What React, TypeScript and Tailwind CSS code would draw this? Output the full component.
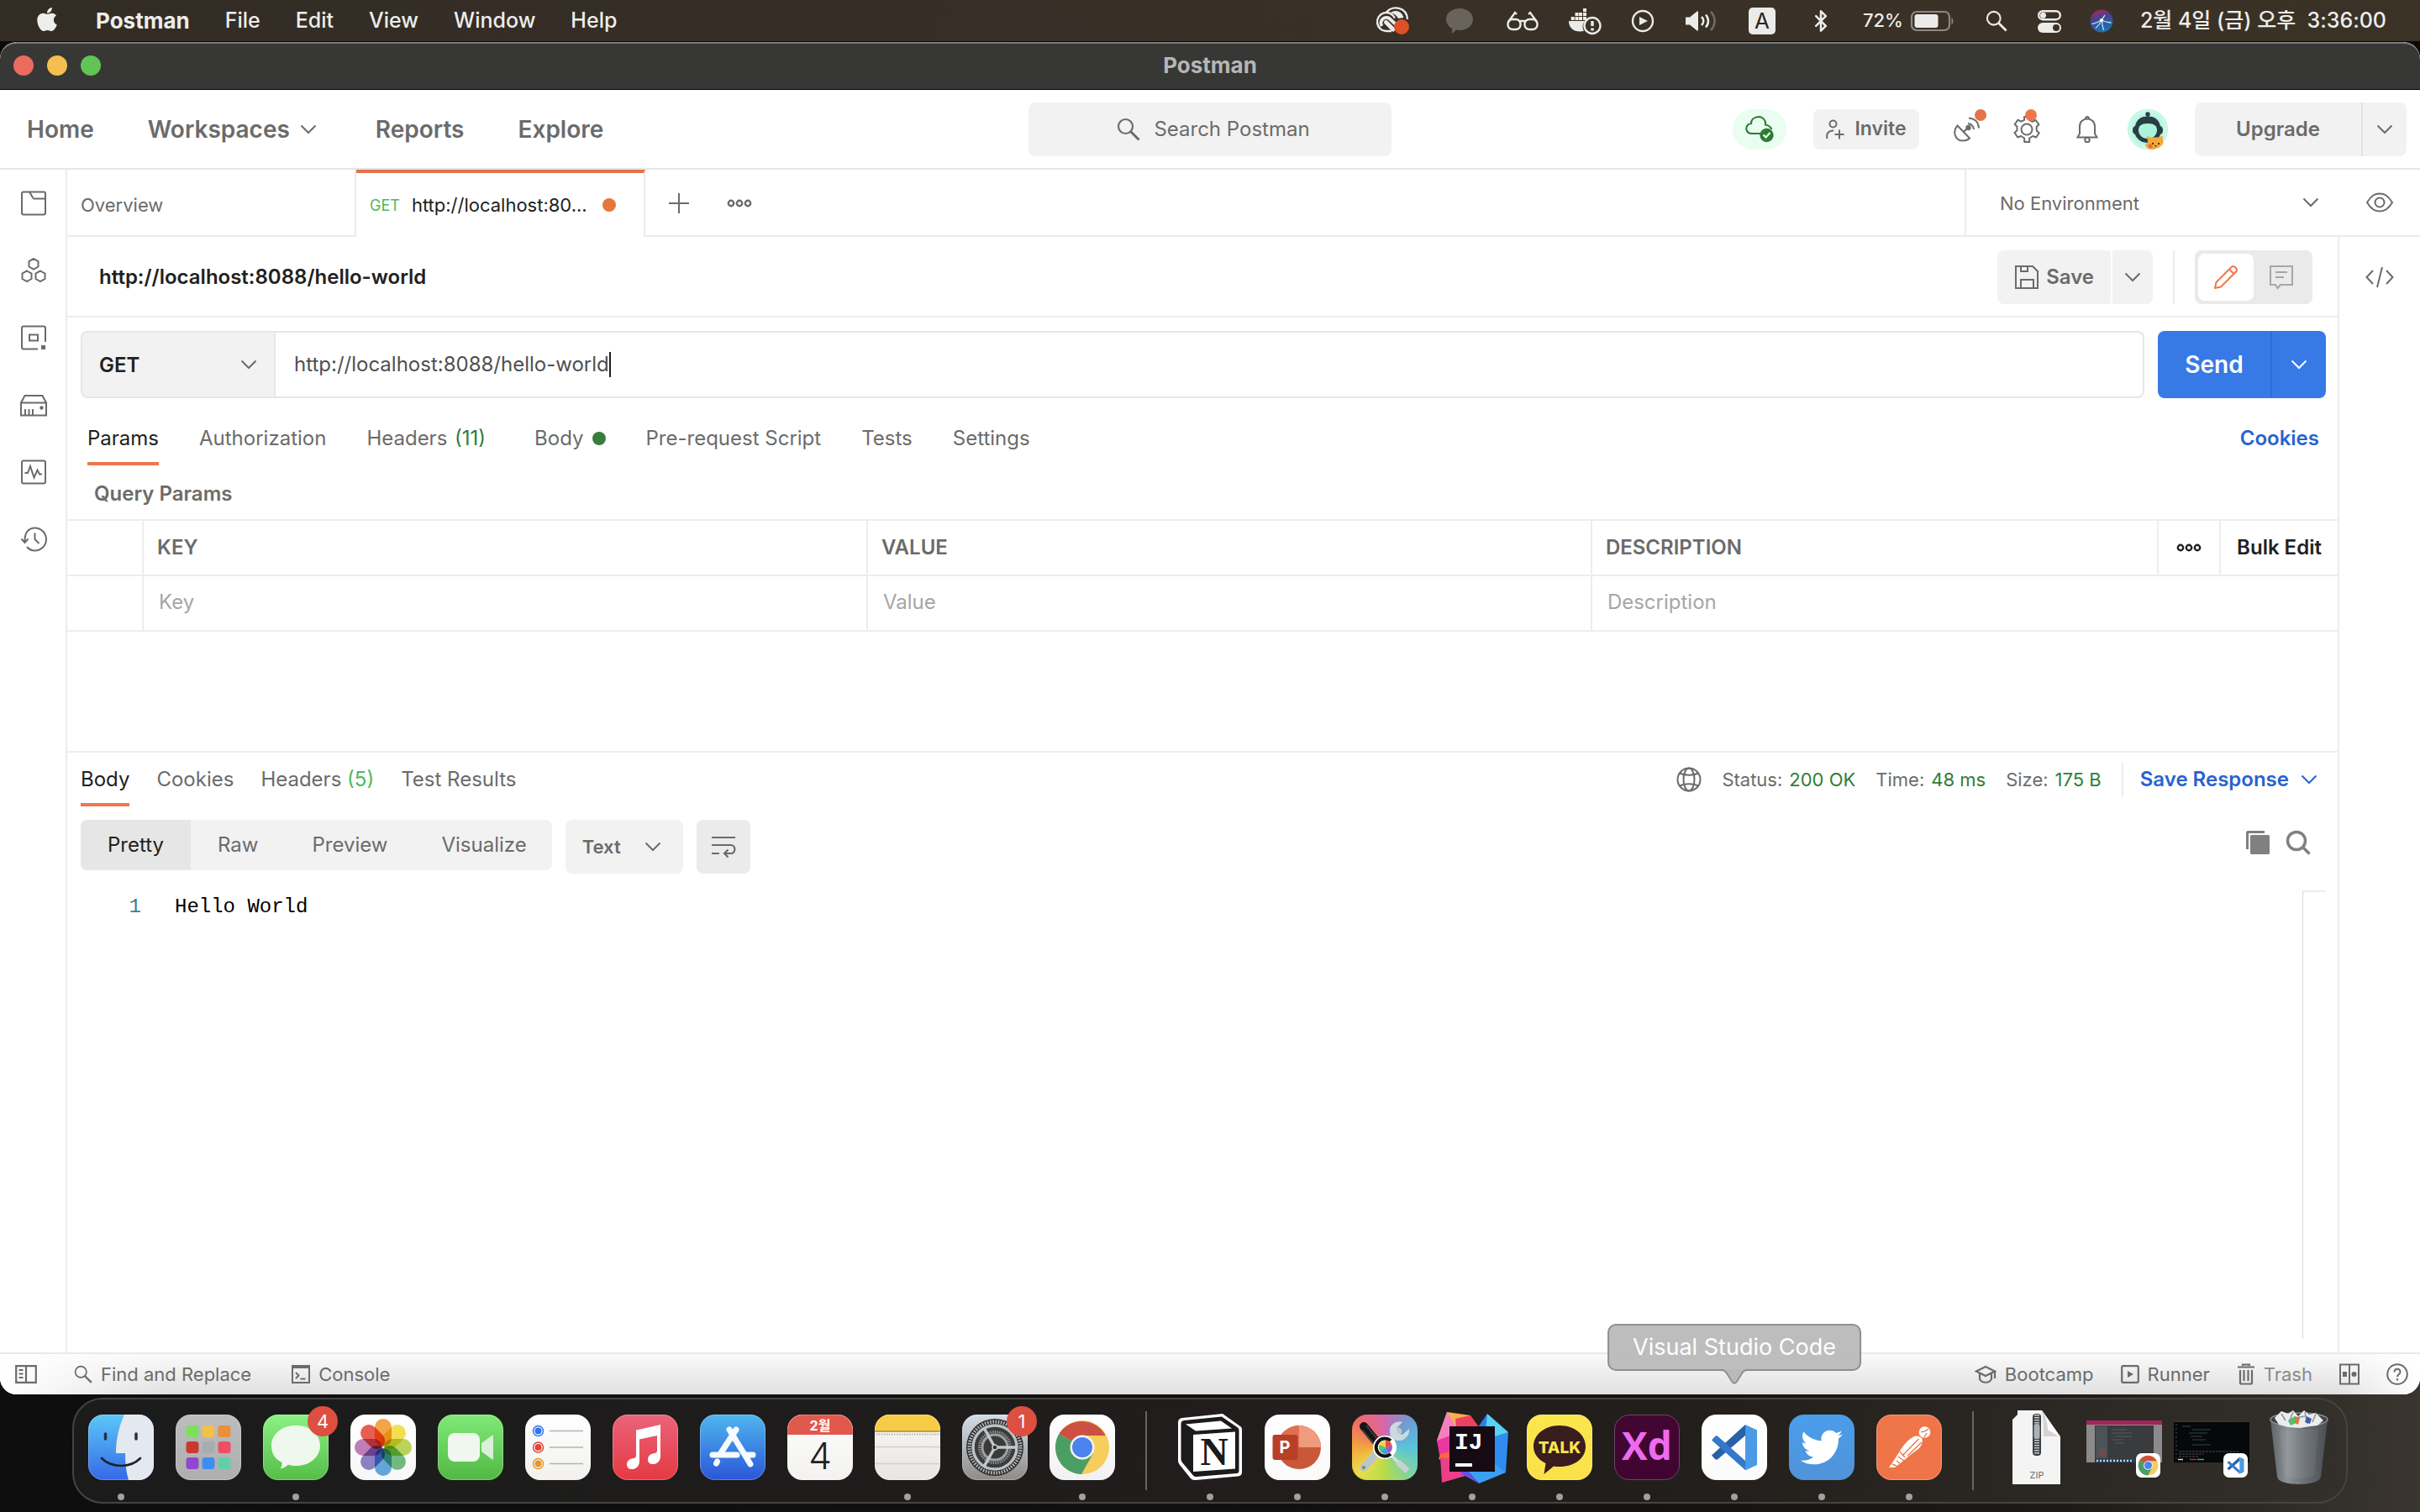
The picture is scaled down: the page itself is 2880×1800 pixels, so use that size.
import React from "react";
import { Bluetooth } from "lucide-react";
import { FaApple, FaTwitter } from "react-icons/fa";

const SANS = "font-['Inter','Noto_Sans_CJK_KR',sans-serif]";

/* ---------- shared small icons ---------- */

function Chevron({ className = "" }: { className?: string }) {
  return (
    <svg viewBox="0 0 20 20" className={`size-5 shrink-0 ${className}`} fill="none" stroke="currentColor" strokeWidth="2">
      <path d="M1.500 5.500 10 14l8.500-8.500" />
    </svg>
  );
}

function Dots({ className = "" }: { className?: string }) {
  return (
    <svg viewBox="0 0 30 12" className={`h-3 w-[30px] shrink-0 ${className}`} fill="none" stroke="currentColor" strokeWidth="2.400">
      <circle cx="5" cy="6" r="3.200" />
      <circle cx="15" cy="6" r="3.200" />
      <circle cx="25" cy="6" r="3.200" />
    </svg>
  );
}

function Magnifier({ className = "" }: { className?: string }) {
  return (
    <svg viewBox="0 0 28 28" className={`shrink-0 ${className}`} fill="none" stroke="currentColor" strokeWidth="2.200">
      <circle cx="10.500" cy="10.500" r="8.500" />
      <path d="m16.500 16.500 10 10" strokeWidth="3" />
    </svg>
  );
}

/* ---------- macOS menu bar ---------- */

function MenuBar() {
  const menus = ["File", "Edit", "View", "Window", "Help"];
  return (
    <header className="flex h-[49px] shrink-0 items-center bg-gradient-to-r from-[#322c24] via-[#382f27] to-[#3b3226] pr-10 pl-10 text-[25px] text-[#ededeb]">
      <FaApple className="mb-1 size-8" />
      <nav className="ml-[42px] flex items-center gap-[42px] font-medium">
        <button className="text-[26px] font-bold">Postman</button>
        {menus.map((m) => (
          <button key={m}>{m}</button>
        ))}
      </nav>
      <div className="ml-auto flex items-center">
        <svg viewBox="0 0 42 34" className="h-[34px] w-[42px]" fill="none" stroke="#ebebe9" strokeWidth="2.400">
          <path d="M13 6.500C20-2 37 0 38 15" />
          <path d="M19 29H12.500A11 11 0 1 1 23 13.500" />
          <path d="M18 7c8-5 14 0 15.500 6L27 14c-2-4-5-5.500-9-7z" fill="#ebebe9" stroke="none" />
          <path d="m21 27-8.500-8.500" strokeWidth="5" strokeLinecap="round" />
          <path d="M7.500 23a6.500 6.500 0 0 1 9-9L24 21" strokeWidth="4" />
          <circle cx="31" cy="24" r="9" fill="#dc5125" stroke="none" />
        </svg>
        <svg viewBox="0 0 32 30" className="ml-[42px] h-[30px] w-8" fill="#68645b">
          <path d="M16 0c9 0 16 5.500 16 13s-7 13-16 13c-1.500 0-3 0-4-.5C10 28 8.500 29 6.500 30c.7-2 .8-3.700.5-6C2.500 21.500 0 17.500 0 13 0 5.500 7 0 16 0z" />
        </svg>
        <svg viewBox="0 0 38 24" className="ml-10 h-6 w-[38px]" fill="none" stroke="#ebebe9" strokeWidth="2.400">
          <rect x="1.500" y="10" width="15" height="12" rx="5.500" />
          <rect x="21.500" y="10" width="15" height="12" rx="5.500" />
          <path d="M16 12h6M2 13l8-11 2 2M36 13 28 2l-2 2" />
        </svg>
        <svg viewBox="0 0 40 34" className="ml-9 h-[34px] w-10">
          <g fill="#ebebe9">
            <path d="M17 2h4v4h-4zM7.500 7h4v4h-4zM12 7h4v4h-4zM17 7h4v4h-4zM2.700 12h4v4h-4zM7.500 12h4v4h-4zM12 12h4v4h-4zM17 12h4v4h-4zM0 17h19c-3 4-3 8-1 12C8 31 0 27 0 17z" />
          </g>
          <circle cx="28" cy="22.500" r="9.500" fill="#3b3226" stroke="#ebebe9" strokeWidth="2.400" />
          <path d="M28 17v6M28 25.500v3" stroke="#ebebe9" strokeWidth="3.500" />
        </svg>
        <svg viewBox="0 0 28 28" className="ml-[34px] size-7">
          <circle cx="14" cy="14" r="12" fill="none" stroke="#ebebe9" strokeWidth="2.400" />
          <path d="m10 9 10 5-10 5z" fill="#ebebe9" />
        </svg>
        <svg viewBox="0 0 38 28" className="ml-9 h-7 w-[38px]" fill="none" stroke="#ebebe9" strokeWidth="2.600">
          <path d="M1 9.500h5L14 3c1-1 2-1 2 1v20c0 2-1 2-2 1l-8-6.500H1z" fill="#ebebe9" stroke="none" />
          <path d="M20 9c3 3 3 7 0 10M25 6.500c4 4.500 4 10.500 0 15" />
          <path d="M31 3c6 6 6 16 0 22" stroke="#736c62" />
        </svg>
        <span className="ml-[38px] flex size-8 items-center justify-center rounded-[5px] bg-[#ebebe9] text-[26px] text-[#2b261d]">A</span>
        <Bluetooth className="ml-10 size-7" strokeWidth={2.2} />
        <span className="ml-9 text-[22px] font-medium">72%</span>
        <svg viewBox="0 0 54 26" className="ml-2 h-[26px] w-[54px]">
          <rect x="2" y="2" width="45" height="22" rx="6" fill="none" stroke="#8e8880" strokeWidth="2.200" />
          <path d="M49.500 9c2.500 1 2.500 7 0 8z" fill="#8e8880" />
          <rect x="5.500" y="5" width="28" height="16" rx="3" fill="#ebebe9" />
        </svg>
        <Magnifier className="ml-9 size-[26px]" />
        <svg viewBox="0 0 28 28" className="ml-9 size-7">
          <rect x="1.200" y="2.200" width="25.600" height="10" rx="5" fill="none" stroke="#ebebe9" strokeWidth="2.400" />
          <circle cx="6.500" cy="7.200" r="3.500" fill="#ebebe9" />
          <rect y="16" width="28" height="12" rx="6" fill="#ebebe9" />
          <circle cx="22" cy="22" r="4" fill="#3b3226" />
        </svg>
        <svg viewBox="0 0 28 28" className="ml-[34px] size-7">
          <defs>
            <linearGradient id="siri" x1="0" y1="0" x2="0.300" y2="1">
              <stop offset="0" stopColor="#b4264f" />
              <stop offset="0.450" stopColor="#4a3f8f" />
              <stop offset="1" stopColor="#1f6fb4" />
            </linearGradient>
          </defs>
          <circle cx="14" cy="14" r="13.500" fill="url(#siri)" />
          <path d="M2.500 17.500c4.500-.5 8-2.500 11.500-5 3 2.500 6 3 11.500 3.500M14.500 13c0 5 .5 8 2 12M14 13c-1.500 4-4 7-7 9.500M14 13l4-6" stroke="#9fe6ee" strokeWidth="1.400" fill="none" />
          <circle cx="14" cy="13" r="2" fill="#fff" />
        </svg>
        <span className="ml-8 font-medium whitespace-pre">2월 4일 (금) 오후  3:36:00</span>
      </div>
    </header>
  );
}

/* ---------- Postman header ---------- */

function TitleBar() {
  return (
    <div className="relative flex h-[57px] shrink-0 items-center justify-center rounded-t-[20px] border-t-2 border-b border-t-[#7b7b7a] border-b-black bg-[#373735] pb-[3px]">
      <div className="absolute left-4 flex gap-4">
        <button aria-label="Close" className="size-6 rounded-full bg-[#ec6b5f]" />
        <button aria-label="Minimize" className="size-6 rounded-full bg-[#f4bf50]" />
        <button aria-label="Zoom" className="size-6 rounded-full bg-[#61c455]" />
      </div>
      <h1 className="text-[26px] font-bold text-[#b6b6b5]">Postman</h1>
    </div>
  );
}

function AppHeader() {
  return (
    <div className="flex h-[95px] shrink-0 items-center border-b-2 border-[#e6e6e6] bg-white px-4 text-[#6b6b6b]">
      <nav className="flex flex-1 items-center gap-16 text-[28px] font-semibold">
        <a href="#home" className="ml-4">Home</a>
        <button className="mr-[6px] flex items-center gap-3">
          Workspaces
          <Chevron />
        </button>
        <a href="#reports">Reports</a>
        <a href="#explore">Explore</a>
      </nav>
      <button className="flex h-16 w-[432px] items-center justify-center gap-4 rounded-lg bg-[#f2f2f2] pl-2 text-[24px]">
        <Magnifier className="size-7" />
        Search Postman
      </button>
      <div className="flex flex-1 items-center justify-end">
        <button aria-label="Sync status" className="flex h-12 w-16 items-center justify-center rounded-full bg-[#e9fdf1]">
          <svg viewBox="0 0 34 32" className="h-8 w-[34px]" fill="none" stroke="#2f7d35" strokeWidth="2.200">
            <path d="M18 21H7.500A6 6 0 0 1 7 9c0-9 14-11 17-2v3.500c4 .5 6 2.500 7.500 5.500" />
            <circle cx="25.500" cy="23" r="8.200" fill="#2f7d35" stroke="none" />
            <path d="m21.500 22.500 3 3 5-5.500" stroke="#fff" />
          </svg>
        </button>
        <button className="ml-8 flex h-12 w-[126px] items-center justify-center gap-3 rounded-lg bg-[#f2f2f2] text-[23px] font-semibold">
          <svg viewBox="0 0 22 24" className="h-6 w-[22px]" fill="none" stroke="currentColor" strokeWidth="2">
            <circle cx="8.500" cy="5.500" r="4" />
            <path d="M1.200 23v-3c0-4 3-6.500 8-6.500M10.500 18h11M16 12.500v11" />
          </svg>
          Invite
        </button>
        <button aria-label="Capture requests" className="relative ml-10 flex size-8 items-center justify-center">
          <svg viewBox="0 0 32 32" className="size-8" fill="none" stroke="currentColor" strokeWidth="2">
            <path d="M5.500 11.500C-1 19 3 29.500 12 29.500c3.500 0 6-1 8-3zM13 19l4-4M18 9c4 .5 6.500 3 7 7M19 2.500c7 .5 11.500 5 12 12" />
            <circle cx="18.500" cy="14" r="3.200" fill="currentColor" stroke="none" />
          </svg>
          <span className="absolute -top-2 -right-2 size-[14px] rounded-full bg-[#e27549]" />
        </button>
        <button aria-label="Settings" className="relative ml-10 flex size-8 items-center justify-center">
          <svg viewBox="0 0 32 32" className="size-8" fill="none" stroke="currentColor" strokeWidth="2">
            <path d="M13 1h6v4l4 1.800 3.500-2 4 5.500-2.800 2.700v4.500l3 2.700-3.500 5.300-4-1.500-4 2.500V31h-6v-4.500l-4-2.500-4 1.500L1.500 20l3-2.700v-4.600L1.700 10l3.800-5.300 3.500 2L13 5z" strokeLinejoin="round" />
            <circle cx="16" cy="16" r="6.500" />
          </svg>
          <span className="absolute -top-2 right-1 size-[14px] rounded-full bg-[#f0764a]" />
        </button>
        <button aria-label="Notifications" className="ml-10 flex size-8 items-center justify-center">
          <svg viewBox="0 0 32 32" className="size-8" fill="none" stroke="currentColor" strokeWidth="2">
            <path d="M4.500 25.500h23L25 21V12.500c0-12-18-12-18 0V21zM14 3.500c-.5-3.300 4.500-3.300 4 0" />
            <circle cx="16" cy="28.500" r="2.800" />
          </svg>
        </button>
        <button aria-label="Account" className="ml-8">
          <svg viewBox="0 0 48 48" className="size-12">
            <circle cx="24" cy="24" r="24" fill="#b5f5df" />
            <circle cx="24" cy="24" r="22" fill="none" stroke="#d8fbef" strokeWidth="1.500" />
            <circle cx="24" cy="24" r="19.500" fill="none" stroke="#d8fbef" strokeWidth="1" />
            <circle cx="24" cy="6" r="2.700" fill="#2a3d45" />
            <path d="M23 6h2v6h-2z" fill="#2a3d45" />
            <path d="M6 25c0-3 1-4 3-5C11 11 17 8.500 24 8.500S37 11 39 20c2 1 3 2 3 5s-1 4-3 5c-2 6-8 10-15 10S11 36 9 30c-2-1-3-2-3-5z" fill="#2a3d45" />
            <path d="M13 25c0-5 3-8 11-8s11 3 11 8-4 10-11 10-11-5-11-10z" fill="#a9f3da" />
            <path d="M23 31.500c2.500 1 4 2.500 5 2h7c2 0 4-1 6.500-2l1 9C41 44 35 47.500 30 48c-5 0-7-2-9-5 1-2 3-3 3-5z" fill="#f3a83b" />
            <circle cx="27" cy="44" r="2.500" fill="#ee6a4b" />
            <path d="M29 40h2v2h-2zM36 40h2v2h-2zM32 43h3l-1.500 2z" fill="#4b3420" />
          </svg>
        </button>
        <div className="ml-8 flex h-16 w-[252px] overflow-hidden rounded-lg bg-[#f2f2f2]">
          <button className="flex-1 border-r-2 border-[#e3e3e3] text-[24px] font-semibold">Upgrade</button>
          <button aria-label="Upgrade options" className="flex w-[52px] items-center justify-center">
            <Chevron />
          </button>
        </div>
      </div>
    </div>
  );
}

/* ---------- left rail ---------- */

const railIcons: { label: string; icon: React.ReactNode }[] = [
  {
    label: "Collections",
    icon: (
      <>
        <path d="M2 4.500C2 3.500 3 2.500 4 2.500h24c1 0 2 1 2 2v23c0 1-1 2-2 2H4c-1 0-2-1-2-2z" />
        <path d="M11 2.500c1 1 4 8 5.500 8H30" />
      </>
    ),
  },
  {
    label: "APIs",
    icon: <path d="m16 2 5.500 3.200v6.300L16 14.700l-5.500-3.200V5.200zM8 16.500l5.500 3.200V26L8 29.200 2.500 26v-6.300zM24 16.500l5.500 3.200V26L24 29.200 18.500 26v-6.300z" />,
  },
  {
    label: "Environments",
    icon: (
      <>
        <path d="M21 29.500H4c-1 0-2-1-2-2v-23c0-1 1-2 2-2h24c1 0 2 1 2 2V21" />
        <rect x="11" y="12.500" width="10" height="7" />
        <path d="M25 25h5v5h-5z" fill="currentColor" stroke="none" />
      </>
    ),
  },
  {
    label: "Mock servers",
    icon: (
      <>
        <path d="M1 13.500h30v15H1zM1 13.500 5.500 5h21L31 13.500M6 21v7M10.500 21v7M15 21v7" />
        <circle cx="25.500" cy="19.500" r="2.200" fill="currentColor" stroke="none" />
      </>
    ),
  },
  {
    label: "Monitors",
    icon: (
      <>
        <rect x="2" y="2.500" width="28" height="27" rx="2" />
        <path d="M5.500 17h3.500l3-8 4.500 13.500 4-9 2.500 5h3" />
      </>
    ),
  },
  {
    label: "History",
    icon: <path d="M5.500 19.500C5 8 10 2.500 17.500 2.500 25 2.500 31 8.500 31 16s-6 13.500-13.500 13.500c-4 0-7-1.500-9.500-4.500M1.500 15.500l4 4.500 4-4.500M17.500 8.500V16l5 5" />,
  },
];

function LeftRail() {
  return (
    <nav className="flex w-20 shrink-0 flex-col items-center gap-12 border-r-2 border-[#ededed] pt-6 pl-[2px] text-[#6b6b6b]">
      {railIcons.map((r) => (
        <button key={r.label} aria-label={r.label}>
          <svg viewBox="0 0 32 32" className="size-8" fill="none" stroke="currentColor" strokeWidth="2">
            {r.icon}
          </svg>
        </button>
      ))}
    </nav>
  );
}

/* ---------- tab strip ---------- */

function TabStrip() {
  return (
    <div className="flex h-20 shrink-0 text-[22px] text-[#6b6b6b]">
      <button className="w-[344px] border-r-2 border-b-2 border-[#ebebeb] pt-[6px] pl-4 text-left">Overview</button>
      <button className="flex w-[344px] items-center border-t-4 border-r-2 border-t-[#e27549] border-r-[#ebebeb] pl-4">
        <span className="mr-[14px] text-[18px] text-[#4fb85b]">GET</span>
        <span className="text-[#212121]">http://localhost:80...</span>
        <span className="ml-[18px] size-4 rounded-full bg-[#e57839]" />
      </button>
      <div className="flex flex-1 items-center border-r-2 border-b-2 border-[#ebebeb] pt-[2px] pl-[27px]">
        <button aria-label="New tab">
          <svg viewBox="0 0 26 26" className="size-[26px]" stroke="currentColor" strokeWidth="2">
            <path d="M13 1v24M1 13h24" />
          </svg>
        </button>
        <button aria-label="Tab options" className="ml-11">
          <Dots />
        </button>
      </div>
      <div className="flex w-[540px] items-center border-b-2 border-[#ebebeb]">
        <div className="relative flex h-full flex-1 items-center">
          <select aria-label="Environment" className="h-full w-full appearance-none pt-[2px] pl-10 outline-none">
            <option>No Environment</option>
          </select>
          <Chevron className="pointer-events-none absolute right-14" />
        </div>
        <button aria-label="Environment quick look" className="mr-8">
          <svg viewBox="0 0 32 24" className="h-6 w-8" fill="none" stroke="currentColor" strokeWidth="2">
            <path d="M1 12C6 4 10 1.500 16 1.500S26 4 31 12c-5 8-9 10.500-15 10.500S6 20 1 12z" />
            <circle cx="16" cy="12" r="5.500" />
          </svg>
        </button>
      </div>
    </div>
  );
}

/* ---------- request ---------- */

function RequestTitle() {
  return (
    <div className="flex h-24 shrink-0 items-center border-b-2 border-[#ededed] pt-[2px] pr-[30px] pl-[38px] text-[24px] font-semibold">
      <h2 className="flex-1 text-[#212121]">http://localhost:8088/hello-world</h2>
      <div className="flex h-16 gap-[2px] text-[#6b6b6b]">
        <button className="flex items-center gap-2 rounded-l-lg rounded-r bg-[#f2f2f2] px-5">
          <svg viewBox="0 0 30 30" className="size-[30px]" fill="none" stroke="currentColor" strokeWidth="2">
            <path d="M2 2h20l6 6v20H2zM8 2v6h8V2M8 28V18h15v10" />
          </svg>
          Save
        </button>
        <button aria-label="Save options" className="flex w-12 items-center justify-center rounded-r-lg bg-[#f2f2f2]">
          <Chevron />
        </button>
      </div>
      <div className="mx-6 h-16 w-[2px] bg-[#ededed]" />
      <div className="flex h-16 w-[140px] rounded-lg bg-[#eaeaea] p-1">
        <button aria-label="Edit" className="flex flex-1 items-center justify-center rounded-lg bg-white text-[#f0764a]">
          <svg viewBox="0 0 30 30" className="size-[30px]" fill="none" stroke="currentColor" strokeWidth="2">
            <path d="m2 28 1.500-7L22 2.500c2.500-2 7.500 3 5.500 5.500L9 26.500zM19 5.500l5.500 5.500" strokeLinejoin="round" />
          </svg>
        </button>
        <button aria-label="Comments" className="flex flex-1 items-center justify-center text-[#a6a6a6]">
          <svg viewBox="0 0 30 30" className="size-[30px]" fill="none" stroke="currentColor" strokeWidth="2">
            <path d="M2 2h26v22H14l-3.500 4L8 24H2zM8 9h14M8 15h10" />
          </svg>
        </button>
      </div>
    </div>
  );
}

function UrlBar() {
  return (
    <div className="flex h-24 shrink-0 items-end gap-4 pr-[14px] pl-4">
      <div className="flex h-20 flex-1 overflow-hidden rounded-lg border-2 border-[#e6e6e6]">
        <div className="relative flex w-[230px] items-center border-r-2 border-[#e6e6e6] bg-[#f2f2f2]">
          <select aria-label="HTTP method" className="h-full w-full appearance-none pt-[2px] pl-5 text-[24px] font-semibold text-[#212121] outline-none">
            <option>GET</option>
          </select>
          <Chevron className="pointer-events-none absolute right-5 text-[#6b6b6b]" />
        </div>
        <div className="flex flex-1 items-center pl-[22px]">
          <input
            aria-label="Request URL"
            defaultValue="http://localhost:8088/hello-world"
            className="field-sizing-content text-[24px] text-[#505050] outline-none"
          />
          <span className="h-[30px] w-[2px] bg-[#212121]" />
        </div>
      </div>
      <div className="flex h-20 w-[200px] overflow-hidden rounded-lg bg-[#3779e5] text-white">
        <button className="flex-1 border-r-2 border-[#2f6dd6] text-[28px] font-semibold">Send</button>
        <button aria-label="Send options" className="flex w-16 items-center justify-center">
          <Chevron />
        </button>
      </div>
    </div>
  );
}

function RequestTabs() {
  const tab = "h-16 border-b-4 border-transparent pt-1";
  return (
    <div className="flex h-20 shrink-0 items-end pr-[22px] pl-6 text-[24px] text-[#6b6b6b]">
      <div role="tablist" className="flex flex-1 gap-12">
        <button role="tab" aria-selected className="h-16 border-b-4 border-[#f0764a] pt-1 text-[#212121]">
          Params
        </button>
        <button role="tab" className={tab}>Authorization</button>
        <button role="tab" className={`${tab} mr-[10px]`}>
          Headers <span className="ml-[2px] text-[#2f7d35]">(11)</span>
        </button>
        <button role="tab" className={`${tab} flex items-center gap-[10px]`}>
          Body
          <span className="size-4 rounded-full bg-[#377d3b]" />
        </button>
        <button role="tab" className={tab}>Pre-request Script</button>
        <button role="tab" className={tab}>Tests</button>
        <button role="tab" className={tab}>Settings</button>
      </div>
      <button className={`${tab} font-semibold text-[#2763cf]`}>Cookies</button>
    </div>
  );
}

function ParamsTable() {
  const cell = "border-[#ededed] text-left";
  const field = "w-full pb-[2px] outline-none placeholder:text-[#a6a6a6]";
  return (
    <table className="w-full shrink-0 table-fixed border-collapse text-[24px] text-[#6b6b6b]">
      <colgroup>
        <col className="w-[90px]" />
        <col className="w-[31.9%]" />
        <col className="w-[31.9%]" />
        <col />
        <col className="w-[74px]" />
        <col className="w-[140px]" />
      </colgroup>
      <thead>
        <tr className="h-[66px] border-y-2 border-[#ededed]">
          <th className={`${cell} border-r-2`} />
          <th className={`${cell} border-r-2 pl-4 font-semibold`}>KEY</th>
          <th className={`${cell} border-r-2 pl-4 font-semibold`}>VALUE</th>
          <th className={`${cell} border-r-2 pl-4 font-semibold`}>DESCRIPTION</th>
          <th className={`${cell} border-r-2`}>
            <button aria-label="Column options" className="flex w-full justify-center text-[#212121]">
              <Dots />
            </button>
          </th>
          <th className="text-center">
            <button className="font-semibold text-[#212121]">Bulk Edit</button>
          </th>
        </tr>
      </thead>
      <tbody>
        <tr className="h-[66px] border-b-2 border-[#ededed]">
          <td className={`${cell} border-r-2`} />
          <td className={`${cell} border-r-2 pl-[18px]`}>
            <input aria-label="Key" placeholder="Key" className={field} />
          </td>
          <td className={`${cell} border-r-2 pl-[18px]`}>
            <input aria-label="Value" placeholder="Value" className={field} />
          </td>
          <td colSpan={3} className={`${cell} pl-[18px]`}>
            <input aria-label="Description" placeholder="Description" className={field} />
          </td>
        </tr>
      </tbody>
    </table>
  );
}

/* ---------- response ---------- */

function Metric({ label, value }: { label: string; value: string }) {
  return (
    <span className="flex gap-2">
      {label} <span className="text-[#2f7d35]">{value}</span>
    </span>
  );
}

function ResponsePane() {
  const tab = "h-16 border-b-4 border-transparent pt-1";
  return (
    <section className="flex flex-1 flex-col border-t-2 border-[#ededed] text-[24px] text-[#6b6b6b]">
      <div className="flex h-16 items-start pr-6 pl-4">
        <div role="tablist" className="flex flex-1 gap-8">
          <button role="tab" aria-selected className="h-16 border-b-4 border-[#f0764a] pt-1 text-[#212121]">
            Body
          </button>
          <button role="tab" className={tab}>Cookies</button>
          <button role="tab" className={tab}>
            Headers <span className="text-[#4fb85b]">(5)</span>
          </button>
          <button role="tab" className={tab}>Test Results</button>
        </div>
        <div className="flex h-16 items-center gap-6 text-[22px]">
          <svg viewBox="0 0 30 30" className="size-[30px]" fill="none" stroke="currentColor" strokeWidth="2">
            <circle cx="15" cy="15" r="13.500" />
            <ellipse cx="15" cy="15" rx="6.500" ry="13.500" />
            <path d="M4 7.500c6 3 16 3 22 0M4 22.500c6-3 16-3 22 0" />
          </svg>
          <Metric label="Status:" value="200 OK" />
          <Metric label="Time:" value="48 ms" />
          <Metric label="Size:" value="175 B" />
          <span className="h-10 w-[2px] bg-[#ededed]" />
          <button className="-ml-1 flex items-center gap-[14px] text-[24px] font-semibold text-[#2763cf]">
            Save Response
            <Chevron />
          </button>
        </div>
      </div>
      <div className="mt-4 flex items-start gap-4 pr-8 pl-4">
        <div className="flex h-[60px] overflow-hidden rounded-lg bg-[#f2f2f2]">
          <button className="bg-[#e6e6e6] px-8 text-[#212121]">Pretty</button>
          <button className="px-8">Raw</button>
          <button className="px-8">Preview</button>
          <button className="pr-[30px] pl-8">Visualize</button>
        </div>
        <div className="relative flex h-16 w-[140px] items-center rounded-lg bg-[#f2f2f2]">
          <select aria-label="Response format" className="h-full w-full appearance-none pl-5 text-[22px] font-semibold outline-none">
            <option>Text</option>
          </select>
          <Chevron className="pointer-events-none absolute right-[26px]" />
        </div>
        <button aria-label="Wrap lines" className="flex size-16 items-center justify-center rounded-lg bg-[#ebebeb]">
          <svg viewBox="0 0 30 28" className="h-7 w-[30px]" fill="none" stroke="currentColor" strokeWidth="2.200">
            <path d="M1 3h28M1 12h22.500c6.500 0 6.500 10 0 10H16M1 22h9M20.500 17.500 16 22l4.500 4.500" />
          </svg>
        </button>
        <div className="ml-auto flex items-center gap-[18px] pt-3 text-[#808080]">
          <button aria-label="Copy response">
            <svg viewBox="0 0 30 30" className="size-[30px]" fill="currentColor">
              <path d="M3 1h20v3H4v19H1V3c0-1 1-2 2-2z" />
              <rect x="6" y="6" width="23" height="23" rx="1.500" />
            </svg>
          </button>
          <button aria-label="Search response">
            <svg viewBox="0 0 30 30" className="size-[30px]" fill="none" stroke="currentColor" strokeWidth="3.500">
              <circle cx="13" cy="13" r="10.500" />
              <path d="m20.500 20.500 8 8" />
            </svg>
          </button>
        </div>
      </div>
      <div className="mt-5 flex flex-1 pr-[14px] pb-4">
        <pre className="flex-1 pt-1 font-['Liberation_Mono',monospace] text-[24px] leading-8 text-black">
          <span className="inline-block w-[88px] text-right text-[#3b7d96]">1</span>
          <span className="ml-10">Hello World</span>
        </pre>
        <div className="w-7 border-t-2 border-l border-t-[#ececec] border-l-[#d9d9d9]" />
      </div>
    </section>
  );
}

/* ---------- status bar ---------- */

function StatusBar() {
  const item = "flex items-center gap-[10px]";
  return (
    <footer className="flex h-[50px] shrink-0 items-center border-t-2 border-[#e9e9e9] bg-[linear-gradient(to_right,white,transparent_200px,transparent_calc(100%-100px),white),linear-gradient(#fafafa,#e0e0e0)] pr-[14px] pl-[18px] text-[22px] text-[#6b6b6b]">
      <button aria-label="Toggle sidebar">
        <svg viewBox="0 0 26 22" className="h-[22px] w-[26px]" fill="none" stroke="currentColor" strokeWidth="2.200">
          <path d="M1.200 1.200h23.600v19.600H1.200zM13 1v20M4.500 6h5M4.500 10.500h5M4.500 15h5" />
        </svg>
      </button>
      <button className={`${item} ml-11`}>
        <Magnifier className="size-[22px]" />
        Find and Replace
      </button>
      <button className={`${item} ml-12`}>
        <svg viewBox="0 0 22 22" className="size-[22px]" fill="none" stroke="currentColor" strokeWidth="2">
          <path d="M1 1h20v20H1zM1 3h20M5 9l3.500 3.500L5 16M10.500 16.500h6" />
        </svg>
        Console
      </button>
      <div className="ml-auto flex items-center gap-8">
        <button className={item}>
          <svg viewBox="0 0 26 24" className="h-6 w-[26px]" fill="none" stroke="currentColor" strokeWidth="2.200">
            <path d="M13 3 2 8.500 13 14l11-5.500zM6 11v7c3 5 11 5 14 0v-7M24 8v9" />
          </svg>
          Bootcamp
        </button>
        <button className={item}>
          <svg viewBox="0 0 22 22" className="size-[22px]" fill="none" stroke="currentColor" strokeWidth="2.200">
            <rect x="1.200" y="1.200" width="19.600" height="19.600" rx="1.500" />
            <path d="m8 7 7 4-7 4z" fill="currentColor" stroke="none" />
          </svg>
          Runner
        </button>
        <button className={item}>
          <svg viewBox="0 0 22 26" className="h-[26px] w-[22px]" fill="none" stroke="currentColor" strokeWidth="2.200">
            <path d="M1 4.500h20M7 3V1.500h8V3M4 8v15c0 1 .5 1.500 1.500 1.500h11c1 0 1.500-.5 1.500-1.500V8M8.500 8v13M13.500 8v13" />
          </svg>
          <span className="text-[#8a8a8a]">Trash</span>
        </button>
        <button aria-label="Two-pane view">
          <svg viewBox="0 0 24 26" className="h-[26px] w-6" fill="none" stroke="currentColor" strokeWidth="2">
            <path d="M1 1.500h22v23H1zM12 1.500v23" />
            <path d="M4 10h5v6H4z" fill="currentColor" stroke="none" />
            <circle cx="17.500" cy="13" r="3" fill="currentColor" stroke="none" />
          </svg>
        </button>
        <button aria-label="Help">
          <svg viewBox="0 0 26 26" className="size-[26px]" fill="none" stroke="currentColor" strokeWidth="2">
            <circle cx="13" cy="13" r="11.800" />
            <path d="M9.500 10.500c0-5 7-5 7 0 0 2.500-3.500 2.500-3.500 5.500M13 18v2.500" />
          </svg>
        </button>
      </div>
    </footer>
  );
}

/* ---------- dock ---------- */

function Tile({ id, from, to, children }: { id: string; from: string; to: string; children?: React.ReactNode }) {
  return (
    <svg viewBox="0 0 78 78" className="size-[78px] overflow-visible">
      <defs>
        <linearGradient id={`tile-${id}`} x1="0" y1="0" x2="0" y2="1">
          <stop offset="0" stopColor={from} />
          <stop offset="1" stopColor={to} />
        </linearGradient>
        <clipPath id={`clip-${id}`}>
          <rect width="78" height="78" rx="18" />
        </clipPath>
      </defs>
      <g clipPath={`url(#clip-${id})`}>
        <rect width="78" height="78" fill={`url(#tile-${id})`} />
        {children}
      </g>
      <rect x="0.500" y="0.500" width="77" height="77" rx="17.500" fill="none" stroke="#ffffff" strokeOpacity="0.250" />
    </svg>
  );
}

const Finder = (
  <Tile id="finder" from="#5cc8f8" to="#3468e8">
    <path d="M43 0C36 16 33 30 33 46h11c0 12 1 22 4 32h30V0z" fill="#e4e8ef" />
    <path d="M20.500 23v6M57 23v6" stroke="#243044" strokeWidth="3.500" strokeLinecap="round" />
    <path d="M16 52c12 12 34 12 46 0" fill="none" stroke="#1c2430" strokeWidth="2.600" strokeLinecap="round" />
  </Tile>
);

const launchColors = ["#7be05c", "#f3c04a", "#e8913a", "#c93a2c", "#a6adb2", "#ee4f63", "#8f47cf", "#3d8df2", "#62cfa7"];
const Launchpad = (
  <Tile id="launchpad" from="#bcbdbe" to="#aeaeaf">
    {launchColors.map((c, i) => (
      <rect key={c} x={12.5 + (i % 3) * 19} y={13 + Math.floor(i / 3) * 19} width="15" height="14" rx="3.500" fill={c} />
    ))}
  </Tile>
);

const Messages = (
  <Tile id="messages" from="#8bf285" to="#55bd47">
    <path d="M39 13c17 0 29 10.500 29 24S56 61 39 61c-3 0-6-.3-9-1.200-3 2.700-6 4.200-9.500 4.700 1.700-2.500 2.300-4.800 2-7.500C14 53 10 46 10 37c0-13.500 12-24 29-24z" fill="#eef8ec" />
  </Tile>
);

const petals = ["#f39a2b", "#f2de3c", "#b5d145", "#5fb573", "#4f9fdc", "#7d74c0", "#b76fae", "#e9493c"];
const Photos = (
  <Tile id="photos" from="#ffffff" to="#f7f7f7">
    {petals.map((c, i) => (
      <rect key={c} x="29" y="5" width="20" height="33" rx="10" fill={c} opacity="0.880" className="mix-blend-multiply" transform={`rotate(${i * 45} 39 39)`} />
    ))}
  </Tile>
);

const FaceTime = (
  <Tile id="facetime" from="#7eea78" to="#52b844">
    <rect x="12" y="22" width="38" height="34" rx="8" fill="#f0f8ee" />
    <path d="M52 34 65 24.500c1 0 1 .5 1 1.500v26c0 1 0 1.500-1 1.500L52 44z" fill="#dcefd8" />
  </Tile>
);

const Reminders = (
  <Tile id="reminders" from="#ffffff" to="#f2f1ee">
    {["#2f76ee", "#e0483a", "#e8952f"].map((c, i) => (
      <g key={c}>
        <circle cx="15.500" cy={19.5 + i * 19.5} r="6" fill="none" stroke={c} strokeWidth="1.500" />
        <circle cx="15.500" cy={19.5 + i * 19.5} r="4" fill={c} />
        <path d={`M29 ${19.5 + i * 19.5}h40`} stroke="#b3b3b3" strokeWidth="1.500" />
      </g>
    ))}
  </Tile>
);

const Music = (
  <Tile id="music" from="#ea6479" to="#e53943">
    <path d="M28 18.500 57 12v37.500c0 5-3 9-8 9.500-4.500.5-7-2-7-5.500 0-4 3-6.500 7-7.200 3-.5 4-1 4-3.500V25l-21 4.500v26c0 5-3 9-8 9.500-4.500.5-7-2-7-5.500 0-4 3-6.500 7-7.200 3-.5 4-1 4-3.500z" fill="#fff" />
  </Tile>
);

const AppStore = (
  <Tile id="appstore" from="#4fb6ee" to="#2a56d8">
    <g stroke="#f7fbff" strokeWidth="7" strokeLinecap="round">
      <path d="M43 18 24 47M20.500 56l-1 2M35 18l25 41M15 48h29M55 48h8" />
    </g>
  </Tile>
);

const Calendar = (
  <Tile id="calendar" from="#fdfdfc" to="#f3f2f0">
    <rect width="78" height="24" fill="#e1594d" />
    <text x="39" y="19" textAnchor="middle" fontSize="16" fontWeight="700" fill="#fff">2월</text>
    <text x="39" y="65" textAnchor="middle" fontSize="44" fontWeight="300" fill="#222">4</text>
  </Tile>
);

const Notes = (
  <Tile id="notes" from="#f8f7f5" to="#e8e6e1">
    <rect width="78" height="20" fill="#f6cb45" />
    <path d="M0 20h78" stroke="#a78b34" strokeWidth="1.500" />
    <path d="M2 23.500h76" stroke="#a5a39d" strokeWidth="1.500" strokeDasharray="1.500 1.500" />
    <path d="M0 38.500h78M0 58.500h78" stroke="#cfcfd3" strokeWidth="1.500" />
  </Tile>
);

const Preferences = (
  <Tile id="prefs" from="#d3dde6" to="#8f8c89">
    <circle cx="39" cy="39" r="34" fill="#2e2e2e" />
    <circle cx="39" cy="39" r="30.500" fill="none" stroke="#b9bcbe" strokeWidth="4" strokeDasharray="1.600 1.600" />
    <circle cx="39" cy="39" r="26" fill="#3c3c3c" stroke="#bdc1c4" strokeWidth="3.500" />
    <circle cx="39" cy="39" r="18.500" fill="none" stroke="#8d9092" strokeWidth="3" strokeDasharray="1.500 1.200" />
    <circle cx="39" cy="39" r="15" fill="#3a3a3a" stroke="#9da1a3" strokeWidth="3" />
    <path d="M39 39 26 16M39 39h26M39 39 26 62" stroke="#c3c7c9" strokeWidth="3.500" />
    <circle cx="39" cy="39" r="3" fill="#333" stroke="#c3c7c9" strokeWidth="1.500" />
  </Tile>
);

function ChromeMark() {
  return (
    <>
      <circle cx="39" cy="39" r="32" fill="#f5ce5b" />
      <path d="M39 39 11.300 23A32 32 0 0 1 66.700 25H39z" fill="#cc5143" />
      <path d="M39 39 11.300 23A32 32 0 0 0 38 71l14-25z" fill="#4a9e64" />
      <circle cx="39" cy="39" r="14.500" fill="#f4f4f4" />
      <circle cx="39" cy="39" r="12" fill="#4b83ee" />
    </>
  );
}
const Chrome = (
  <Tile id="chrome" from="#ffffff" to="#f1f1f1">
    <ChromeMark />
  </Tile>
);

const Notion = (
  <svg viewBox="0 0 78 82" className="h-[82px] w-[78px]">
    <path d="M6 6 54 1l21 15c1.500 1 2 2 2 4v50c0 4-1.500 5-5 5.500L22 80c-3 0-5-.5-6.500-2.500L3 62c-1.500-2-2-3.500-2-6V11c0-3 2-4.700 5-5z" fill="#fff" />
    <path d="M8 9 53 4.500l19 13c1 1 1.500 1.500 1.500 3.500v48c0 2-1 3-3 3L23 76c-2 0-3.500-.5-4.500-2L6 59c-1-1.500-1.500-2.500-1.500-4.500V13C4.500 10.500 6 9.300 8 9z" fill="#1b1b1b" />
    <path d="M10 13.500 52 9.500l13 9-43 3z" fill="#fff" />
    <path d="m19 26 50-3.500v44L19 70z" fill="#fff" />
    <text x="44" y="62" textAnchor="middle" fontSize="46" fontWeight="700" fontFamily="Liberation Serif, serif" fill="#1b1b1b">N</text>
  </svg>
);

const PowerPoint = (
  <Tile id="ppt" from="#ffffff" to="#fafafa">
    <circle cx="41" cy="39" r="26" fill="#c9573a" />
    <path d="M41 39V13a26 26 0 0 1 26 26z" fill="#f09a7e" />
    <path d="M41 39V13a26 26 0 0 0-26 26z" fill="#dd7052" />
    <rect x="9.500" y="24" width="30" height="30" rx="3" fill="#b83f26" />
    <text x="24" y="46" textAnchor="middle" fontSize="20" fontWeight="700" fill="#fff">P</text>
  </Tile>
);

const ColorSync = (
  <div className="relative size-[78px] overflow-hidden rounded-[18px] bg-[conic-gradient(#d566ae,#6c9fd4,#59c3dc,#7fd3a0,#b5dc48,#e8dd4b,#f3a63d,#ee6a6a,#d566ae)]">
    <svg viewBox="0 0 78 78" className="absolute inset-0 size-[78px]">
      <path d="m14 14 18 22" stroke="#161616" strokeWidth="10" strokeLinecap="round" />
      <path d="m12 18 16 19M17 13l17 21" stroke="#444" strokeWidth="1.500" />
      <path d="m14 63 20-22M45 31l10-11" stroke="#bcc5cb" strokeWidth="9" strokeLinecap="round" />
      <path d="M60 9c-8-2-15 3-15 10s5 13 12 12 12-7 11-14l-8 7-6-2-1-6z" fill="#cdd9e0" />
      <circle cx="14" cy="63" r="2" fill="#6d8c7a" />
      <path d="m46 48 12 12" stroke="#dfe3e6" strokeWidth="3" />
      <path d="m54 56 12 11" stroke="#cbd1d5" strokeWidth="7" />
      <circle cx="39" cy="39" r="14" fill="#fff" />
      <path d="M46 31a10.500 10.500 0 1 0 0 16" fill="none" stroke="#141414" strokeWidth="4" />
      <circle cx="40" cy="39" r="8" fill="#f4d24b" />
      <path d="M40 39v-8a8 8 0 0 1 7.500 5.500z" fill="#e8503a" />
      <path d="m40 39 7.500-2.500a8 8 0 0 1-4 9.700z" fill="#9b59d0" />
      <path d="m40 39 3.500 7.200a8 8 0 0 1-9.500-1.900z" fill="#3fa0e0" />
      <path d="m40 39-6 5.300a8 8 0 0 1-1.400-8.300z" fill="#54c878" />
    </svg>
  </div>
);

const IntelliJ = (
  <svg viewBox="0 0 88 88" className="size-[88px]">
    <path d="M14 2 42 6 24 34 2 36z" fill="#f6b04f" />
    <path d="M2 36 14 2l10 16-4 24z" fill="#f57fc0" />
    <path d="M24 10 42 6l16 22-30 18z" fill="#f0405f" />
    <path d="M2 36 44 20 30 60 6 58z" fill="#e838a0" />
    <path d="m6 52 34-8-14 22-22-8z" fill="#f9693a" />
    <path d="m6 56 40 6-10 16L8 86z" fill="#ec3f8a" />
    <path d="m62 4 25 22-20 14-19-12z" fill="#55d3f5" />
    <path d="m62 4-18 26 14 12z" fill="#2f7de8" />
    <path d="m87 26-3 48-18-12 2-30z" fill="#2f8df0" />
    <path d="m84 74-32 13-18-20 34-6z" fill="#3aa0f5" />
    <path d="m52 87-18-20-4 8z" fill="#6a4fe8" />
    <rect x="17" y="19" width="54" height="54" fill="#160a14" />
    <text x="23" y="46" fontSize="28" fontWeight="700" fontFamily="Liberation Mono, monospace" fill="#fff">IJ</text>
    <path d="M24 65h20" stroke="#fff" strokeWidth="4" />
  </svg>
);

const Kakao = (
  <Tile id="kakao" from="#fae64d" to="#fae14a">
    <path d="M39 13c18 0 31 11 31 25S57 62 39 62c-3 0-5-.2-7-.6L20.500 71l2-13C13.500 53.500 8 46.500 8 38c0-14 13-25 31-25z" fill="#3a1d1d" />
    <text x="39" y="46" textAnchor="middle" fontSize="19" fontWeight="800" fill="#fae64d">TALK</text>
  </Tile>
);

const AdobeXd = (
  <Tile id="xd" from="#430632" to="#3f0530">
    <text x="39" y="54" textAnchor="middle" fontSize="46" fontWeight="700" fontFamily="Open Sans, sans-serif" fill="#ee6bf0">Xd</text>
  </Tile>
);

function CodeMark() {
  return (
    <>
      <path d="M12 48.500 16 53c1 1 2.500 1 3.500 0L52 25V12z" fill="#2862a4" />
      <path d="m52 12 14 6.500V60l-14 6.500V12z" fill="#4a9ae6" />
      <path d="M12 30.500 52 66V55L19.500 26c-1-1-2.500-1-3.500 0z" fill="#3478cb" />
    </>
  );
}
const VSCode = (
  <Tile id="code" from="#ffffff" to="#fbfbfb">
    <CodeMark />
  </Tile>
);

const Twitter = (
  <span className="flex size-[78px] items-center justify-center rounded-[18px] bg-gradient-to-b from-[#4a9dec] to-[#5193d8] text-white">
    <FaTwitter className="size-[50px]" />
  </span>
);

const Postman = (
  <Tile id="postman" from="#ef764a" to="#ee7447">
    <circle cx="57.500" cy="21" r="6.800" fill="#fff" />
    <path d="M53 20.500c3 .5 6-1 9-3.500M57 27l3-5" stroke="#ef764a" strokeWidth="1.400" fill="none" />
    <path d="M45 26c3-1 7 0 9.500 2.500 1 5-1 9-4 12L41 47.500 31 56l-9 7h-7l3-4 9-14c4-7 10-15 18-19z" fill="#fff" />
    <path d="M50.500 29 31 49M54 33 37 49M28 44l6 7M26 50l7 5M24 55l4 3M19 59l5 2" stroke="#ef764a" strokeWidth="1.400" />
  </Tile>
);

const ZipFile = (
  <svg viewBox="0 0 60 90" className="h-[90px] w-[60px]">
    <path d="M7 1h29l22 32v56H1V12l6-6z" fill="#f4f4f4" />
    <path d="M36 1c2 10 2 22 2 31h20z" fill="#d4d4d4" />
    <path d="M36 1c4 6 7 14 7 23l15 9z" fill="#fdfdfd" />
    <rect x="25" y="5" width="10" height="50" rx="4" fill="#3d4043" />
    <path d="M30 6v48" stroke="#c4c8cb" strokeWidth="6" strokeDasharray="1.500 1.500" />
    <rect x="26.500" y="17" width="7" height="18" rx="3" fill="#a9b2b8" />
    <text x="30" y="82" textAnchor="middle" fontSize="11" fill="#707070">ZIP</text>
  </svg>
);

const ChromeWindow = (
  <svg viewBox="0 0 90 74" className="h-[74px] w-[90px] overflow-visible">
    <rect y="5" width="90" height="50" fill="#8b8b8b" />
    <rect y="5" width="90" height="5" fill="#a3245c" />
    <rect x="10" y="11" width="70" height="40" fill="#3a3b3c" />
    <path d="M11 12h14v38H11z" fill="#4b5258" />
    <path d="M30 16h18M30 20h24M34 24h20M30 28h14M34 32h10" stroke="#565a5d" strokeWidth="1" />
    <path d="M15 40h8M15 43h8M15 46h8" stroke="#8c4845" strokeWidth="1.500" />
    <rect x="10" y="51" width="50" height="4" fill="#203f6e" />
    <path d="M12 53h44" stroke="#c8d4e0" strokeWidth="2.500" strokeDasharray="2 2" />
    <g transform="translate(59 44) scale(0.372)">
      <rect width="78" height="78" rx="18" fill="#fff" />
      <ChromeMark />
    </g>
  </svg>
);

const CodeWindow = (
  <svg viewBox="0 0 90 74" className="h-[74px] w-[90px] overflow-visible">
    <rect y="5" width="90" height="50" fill="#060809" />
    <rect y="5" width="90" height="2" fill="#39322c" />
    <path d="M3 9v44" stroke="#2a3a44" strokeWidth="1.500" strokeDasharray="2 3" />
    <path d="M10 12h10M22 16h22M18 20h22M20 24h14M22 28h16M22 34h22" stroke="#2b4750" strokeWidth="1.200" />
    <path d="M6 42h72M6 45h30M6 48h24" stroke="#4b4f52" strokeWidth="1" strokeDasharray="3 1" />
    <path d="M5 51.500h6" stroke="#d8d8d8" strokeWidth="1.500" />
    <path d="M19 51.500h8" stroke="#b12b45" strokeWidth="1.500" />
    <path d="M28 51.500h8" stroke="#5ba84a" strokeWidth="1.500" />
    <g transform="translate(59 44) scale(0.372)">
      <rect width="78" height="78" rx="18" fill="#fff" />
      <CodeMark />
    </g>
  </svg>
);

const TrashBin = (
  <svg viewBox="0 0 70 90" className="h-[90px] w-[70px]">
    <defs>
      <linearGradient id="bin" x1="0" y1="0" x2="1" y2="0">
        <stop offset="0" stopColor="#5f6468" />
        <stop offset="0.300" stopColor="#8d9296" />
        <stop offset="0.600" stopColor="#6a6f74" />
        <stop offset="1" stopColor="#4a4e52" />
      </linearGradient>
    </defs>
    <path d="M1 12h68l-8 68c-1 12-51 12-52 0z" fill="url(#bin)" />
    <ellipse cx="35" cy="12" rx="34" ry="8" fill="#3e4245" stroke="#8a8f93" strokeWidth="1.500" />
    <path d="m6 10 8-8 8 3 6-4 6 7 7-7 6 5 8-2 9 9-7 6-9 1-12 2-14-1-11-3z" fill="#ececec" />
    <path d="m14 5 5 8M28 3l-5 12M42 3l3 14M55 5l-4 10M30 10l12-2" stroke="#8f9192" strokeWidth="1.500" />
    <path d="m22 13 8-5 4 7-9 4z" fill="#4cc26c" />
    <path d="m30 8 6 2-2 8-4-2z" fill="#e0783a" />
    <path d="m44 8 6 3-2 6-6-2z" fill="#3a5fae" />
    <path d="M12 24h46l-5 54c-8 5-28 5-36 0z" fill="#ffffff" opacity="0.060" />
  </svg>
);

type DockApp = { name: string; icon: React.ReactNode; running?: boolean; badge?: string; tooltip?: boolean };

const mainApps: DockApp[] = [
  { name: "Finder", icon: Finder, running: true },
  { name: "Launchpad", icon: Launchpad },
  { name: "Messages", icon: Messages, running: true, badge: "4" },
  { name: "Photos", icon: Photos },
  { name: "FaceTime", icon: FaceTime },
  { name: "Reminders", icon: Reminders },
  { name: "Music", icon: Music },
  { name: "App Store", icon: AppStore },
  { name: "Calendar", icon: Calendar },
  { name: "Notes", icon: Notes, running: true },
  { name: "System Preferences", icon: Preferences, badge: "1" },
  { name: "Chrome", icon: Chrome, running: true },
];

const userApps: DockApp[] = [
  { name: "Notion", icon: Notion, running: true },
  { name: "PowerPoint", icon: PowerPoint, running: true },
  { name: "ColorSync Utility", icon: ColorSync, running: true },
  { name: "IntelliJ IDEA", icon: IntelliJ, running: true },
  { name: "KakaoTalk", icon: Kakao, running: true },
  { name: "Adobe XD", icon: AdobeXd, running: true },
  { name: "Visual Studio Code", icon: VSCode, running: true, tooltip: true },
  { name: "Twitter", icon: Twitter, running: true },
  { name: "Postman app", icon: Postman, running: true },
];

const stackItems: DockApp[] = [
  { name: "ZIP archive", icon: ZipFile },
  { name: "Minimized Chrome window", icon: ChromeWindow },
  { name: "Minimized Code window", icon: CodeWindow },
  { name: "Trash bin", icon: TrashBin },
];

function DockTooltip({ label }: { label: string }) {
  return (
    <span className="absolute bottom-[140px] left-1/2 flex -translate-x-1/2 flex-col items-center">
      <span className="flex h-14 items-center rounded-[10px] border-2 border-[#8f8f8f] bg-[#b9b9b9]/95 px-7 text-[27px] whitespace-nowrap text-white">
        {label}
      </span>
      <svg viewBox="0 0 34 18" className="-mt-[2px] h-[18px] w-[34px]">
        <path d="M0 0c5 0 6 2 8 5l6 9.500c2 3 4 3 6 0L26 5c2-3 3-5 8-5z" fill="#b9b9b9" />
        <path d="M0 1c5 0 6 1 8 4l6 9.500c2 3 4 3 6 0L26 5c2-3 3-4 8-4" fill="none" stroke="#8f8f8f" strokeWidth="2" />
      </svg>
    </span>
  );
}

function DockItem({ app }: { app: DockApp }) {
  return (
    <li className="relative flex h-full w-[104px] items-center justify-center">
      <button aria-label={app.name} className="mb-2 flex items-center justify-center">
        {app.icon}
      </button>
      {app.badge && (
        <span className="absolute top-2 right-[2px] flex size-9 items-center justify-center rounded-full bg-[#dd4f40] text-[22px] text-white">
          {app.badge}
        </span>
      )}
      {app.running && <span className="absolute bottom-[2px] left-1/2 size-2 -translate-x-1/2 rounded-full bg-[#a1a1a1]" />}
      {app.tooltip && <DockTooltip label={app.name} />}
    </li>
  );
}

function DockDivider() {
  return (
    <li className="flex w-12 items-center justify-center">
      <span className="h-[94px] w-[2px] bg-[#66645f]" />
    </li>
  );
}

function Dock() {
  return (
    <nav aria-label="Dock" className="mx-auto mt-1 mb-[10px] h-[126px] shrink-0 rounded-[36px] border-2 border-[#45443f] bg-[linear-gradient(to_right,#1b1b1b,#201d1c_50%,#211e1b_70%,#33302b)] px-1">
      <ul className="flex h-full">
        {mainApps.map((a) => (
          <DockItem key={a.name} app={a} />
        ))}
        <DockDivider />
        {userApps.map((a) => (
          <DockItem key={a.name} app={a} />
        ))}
        <DockDivider />
        {stackItems.map((a) => (
          <DockItem key={a.name} app={a} />
        ))}
      </ul>
    </nav>
  );
}

/* ---------- page ---------- */

export default function App() {
  return (
    <div className={`${SANS} flex h-screen flex-col overflow-hidden bg-[linear-gradient(to_right,#0e0e0e,#121010_60%,#1c1a16_85%,#3a362f)] leading-normal`}>
      <MenuBar />
      <main className="flex min-h-0 flex-1 flex-col bg-[linear-gradient(#0c0b0a_60%,transparent_60%)]">
        <div className="mt-[1px] flex min-h-0 flex-1 flex-col overflow-hidden rounded-[20px] bg-white">
          <TitleBar />
          <AppHeader />
          <div className="flex min-h-0 flex-1">
            <LeftRail />
            <div className="flex min-w-0 flex-1 flex-col">
              <TabStrip />
              <div className="flex min-h-0 flex-1">
                <div className="flex min-w-0 flex-1 flex-col border-r-2 border-[#ededed]">
                  <RequestTitle />
                  <UrlBar />
                  <RequestTabs />
                  <h3 className="flex h-16 shrink-0 items-center pt-1 pl-8 text-[24px] font-semibold text-[#6b6b6b]">Query Params</h3>
                  <ParamsTable />
                  <div className="h-[142px] shrink-0" />
                  <ResponsePane />
                </div>
                <aside className="flex w-24 shrink-0 justify-center pt-8 text-[#6b6b6b]">
                  <button aria-label="Code snippet" className="h-8">
                    <svg viewBox="0 0 34 26" className="h-[26px] w-[34px]" fill="none" stroke="currentColor" strokeWidth="2">
                      <path d="M9 5 1.500 13 9 21M25 5l7.500 8L25 21M20 1l-6 24" />
                    </svg>
                  </button>
                </aside>
              </div>
            </div>
          </div>
          <StatusBar />
        </div>
      </main>
      <Dock />
    </div>
  );
}
